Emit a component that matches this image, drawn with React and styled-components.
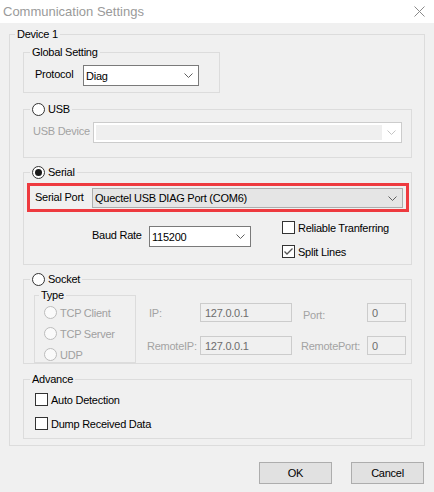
import React from "react";
import styled, { createGlobalStyle } from "styled-components";

const GlobalStyle = createGlobalStyle`
  html, body {
    margin: 0;
    padding: 0;
    background: #f0f0f0;
  }
  body {
    font-family: "Liberation Sans", Arial, sans-serif;
    font-size: 11px;
    letter-spacing: -0.25px;
    color: #000;
  }
  * {
    box-sizing: border-box;
  }
`;

const Window = styled.div`
  width: 434px;
  height: 492px;
  background: #f0f0f0;
  display: flex;
  flex-direction: column;
`;

const TitleBar = styled.div`
  height: 23px;
  flex: none;
  background: #fff;
  display: flex;
  align-items: center;
  justify-content: space-between;
  padding: 0 9px 1px 3px;
  font-size: 13px;
  letter-spacing: 0;
  color: #9a9a9a;
`;

const Group = styled.fieldset`
  margin: 0;
  margin-top: ${(p) => p.$mt || 0}px;
  padding: 0;
  border: 1px solid #dcdcdc;
  min-width: 0;
  width: ${(p) => (p.$w ? `${p.$w}px` : "auto")};
  flex: none;
`;

const DeviceGroup = styled(Group)`
  margin: 3px 9px 0 9px;
`;

const Legend = styled.legend`
  margin-left: ${(p) => p.$indent ?? 6}px;
  padding: 0 2px;
  height: 16px;
  line-height: 16px;
  display: flex;
  align-items: center;
  gap: 3px;
  color: #000;
`;

const Body = styled.div`
  display: flex;
  flex-direction: ${(p) => p.$dir || "row"};
  align-items: ${(p) => p.$align || "center"};
  padding: ${(p) => p.$pad || "0"};
  gap: ${(p) => p.$gap || 0}px;
`;

const Label = styled.span`
  width: ${(p) => (p.$w ? `${p.$w}px` : "auto")};
  flex: none;
  padding-bottom: 3px;
  white-space: nowrap;
  color: ${(p) => (p.$disabled ? "#a3a3a3" : "#000")};
`;

const ComboBox = styled.div`
  height: ${(p) => p.$h || 21}px;
  width: ${(p) => (p.$w ? `${p.$w}px` : "auto")};
  flex: ${(p) => (p.$w ? "none" : "1")};
  display: flex;
  align-items: center;
  border: 1px solid ${(p) => (p.$look === "list" ? "#adadad" : p.$look === "off" ? "#cccccc" : "#7a7a7a")};
  background: ${(p) => (p.$look === "list" ? "#e5e5e5" : "#fff")};
  padding: ${(p) => (p.$look === "off" ? "2px 0 2px 2px" : "0 0 0 2px")};
`;

const ComboText = styled.span`
  flex: 1;
  align-self: stretch;
  display: flex;
  align-items: center;
  white-space: nowrap;
  background: ${(p) => (p.$off ? "#efefef" : "transparent")};
`;

const Chevron = styled.span`
  width: 19px;
  flex: none;
  display: flex;
  justify-content: center;
  align-items: center;
`;

const Combo = ({ value, look, w, h }) => (
  <ComboBox $look={look} $w={w} $h={h}>
    <ComboText $off={look === "off"}>{value}</ComboText>
    <Chevron>
      <svg width="9" height="5" viewBox="0 0 9 5">
        <path d="M0.5 0.5 L4.5 4.5 L8.5 0.5" fill="none" stroke={look === "off" ? "#c4c4c4" : "#606060"} strokeWidth="1" />
      </svg>
    </Chevron>
  </ComboBox>
);

const RadioCircle = styled.span`
  width: 13px;
  height: 13px;
  flex: none;
  border-radius: 50%;
  border: 1px solid ${(p) => (p.$disabled ? "#bcbcbc" : "#333")};
  background: ${(p) => (p.$disabled ? "#fafafa" : "#fff")};
  display: flex;
  align-items: center;
  justify-content: center;
  &::after {
    content: "";
    width: 7px;
    height: 7px;
    border-radius: 50%;
    background: #1a1a1a;
    display: ${(p) => (p.$checked ? "block" : "none")};
  }
`;

const Option = styled.div`
  display: flex;
  align-items: center;
  gap: 3px;
  height: 13px;
  white-space: nowrap;
  color: ${(p) => (p.$disabled ? "#a0a0a0" : "#000")};
`;

const CheckBox = styled.span`
  width: 13px;
  height: 13px;
  flex: none;
  border: 1px solid #333;
  background: #fff;
  display: flex;
  align-items: center;
  justify-content: center;
`;

const Check = ({ label, checked }) => (
  <Option>
    <CheckBox>
      {checked && (
        <svg width="11" height="11" viewBox="0 0 11 11">
          <path d="M1.5 5.5 L4 8 L9.5 2.5" fill="none" stroke="#555" strokeWidth="1.3" />
        </svg>
      )}
    </CheckBox>
    {label}
  </Option>
);

const Radio = ({ label, checked, disabled }) => (
  <Option $disabled={disabled}>
    <RadioCircle $checked={checked} $disabled={disabled} />
    {label}
  </Option>
);

const RedBox = styled.div`
  border: 3px solid #ee3a3f;
  padding: 2px 3px 1px 5px;
  display: flex;
  align-items: center;
`;

const OptionsRow = styled.div`
  display: flex;
  align-items: flex-start;
  margin-top: 9px;
  padding-left: 65px;
`;

const BaudWrap = styled.div`
  display: flex;
  align-items: center;
  margin-top: 5px;
`;

const CheckColumn = styled.div`
  display: flex;
  flex-direction: column;
  gap: 11px;
  margin-left: 31px;
`;

const AddressGrid = styled.div`
  display: grid;
  grid-template-columns: 53px 92px 75px 39px;
  grid-auto-rows: 19px;
  row-gap: 14px;
  align-items: center;
  margin: 16px 0 0 11px;
`;

const GridLabel = styled.span`
  padding-left: ${(p) => p.$pl || 0}px;
  padding-top: ${(p) => p.$pt || 0}px;
  color: #a3a3a3;
  white-space: nowrap;
`;

const Field = styled.div`
  height: 19px;
  border: 1px solid #cccccc;
  background: #f0f0f0;
  color: #6d6d6d;
  padding-left: 4px;
  display: flex;
  align-items: center;
`;

const ButtonRow = styled.div`
  display: flex;
  justify-content: flex-end;
  gap: 19px;
  margin-top: 16px;
  padding-right: 10px;
`;

const Button = styled.button`
  width: 73px;
  height: 22px;
  border: 1px solid #adadad;
  background: #e1e1e1;
  font-family: inherit;
  font-size: 11px;
  letter-spacing: inherit;
  color: #000;
  padding: 0;
`;

export default function App() {
  return (
    <Window>
      <GlobalStyle />
      <TitleBar>
        <span>Communication Settings</span>
        <svg width="11" height="11" viewBox="0 0 11 11">
          <path d="M0.5 0.5 L10.5 10.5 M10.5 0.5 L0.5 10.5" stroke="#8a8a8a" strokeWidth="1" />
        </svg>
      </TitleBar>

      <DeviceGroup>
        <Legend $indent={5}>Device 1</Legend>
        <Body $dir="column" $align="stretch" $pad="1px 12px 6px 13px">
          <Group $w={197} $mt={1}>
            <Legend>Global Setting</Legend>
            <Body $pad="5px 0 6px 11px">
              <Label $w={48}>Protocol</Label>
              <Combo value="Diag" w={116} />
            </Body>
          </Group>

          <Group $mt={8}>
            <Legend>
              <RadioCircle />
              USB
            </Legend>
            <Body $pad="5px 9px 14px 9px">
              <Label $w={60} $disabled>
                USB Device
              </Label>
              <Combo value="" look="off" />
            </Body>
          </Group>

          <Group $mt={6}>
            <Legend>
              <RadioCircle $checked />
              Serial
            </Legend>
            <Body $dir="column" $align="stretch" $pad="3px 2px 6px 3px">
              <RedBox>
                <Label $w={57}>Serial Port</Label>
                <Combo value="Quectel USB DIAG Port (COM6)" look="list" h={20} />
              </RedBox>
              <OptionsRow>
                <BaudWrap>
                  <Label $w={57}>Baud Rate</Label>
                  <Combo value="115200" w={102} />
                </BaudWrap>
                <CheckColumn>
                  <Check label="Reliable Tranferring" />
                  <Check label="Split Lines" checked />
                </CheckColumn>
              </OptionsRow>
            </Body>
          </Group>

          <Group $mt={6}>
            <Legend>
              <RadioCircle />
              Socket
            </Legend>
            <Body $align="flex-start" $pad="0 0 0 10px">
              <Group $w={102}>
                <Legend $indent={4}>Type</Legend>
                <Body $dir="column" $align="flex-start" $gap={8} $pad="3px 0 1px 9px">
                  <Radio label="TCP Client" disabled />
                  <Radio label="TCP Server" disabled />
                  <Radio label="UDP" disabled />
                </Body>
              </Group>
              <AddressGrid>
                <GridLabel $pl={2}>IP:</GridLabel>
                <Field>127.0.0.1</Field>
                <GridLabel $pl={11} $pt={5}>
                  Port:
                </GridLabel>
                <Field>0</Field>
                <GridLabel>RemoteIP:</GridLabel>
                <Field>127.0.0.1</Field>
                <GridLabel $pl={9}>RemotePort:</GridLabel>
                <Field>0</Field>
              </AddressGrid>
            </Body>
          </Group>

          <Group $mt={7}>
            <Legend>Advance</Legend>
            <Body $dir="column" $align="flex-start" $gap={11} $pad="6px 0 8px 11px">
              <Check label="Auto Detection" />
              <Check label="Dump Received Data" />
            </Body>
          </Group>
        </Body>
      </DeviceGroup>

      <ButtonRow>
        <Button>OK</Button>
        <Button>Cancel</Button>
      </ButtonRow>
    </Window>
  );
}
